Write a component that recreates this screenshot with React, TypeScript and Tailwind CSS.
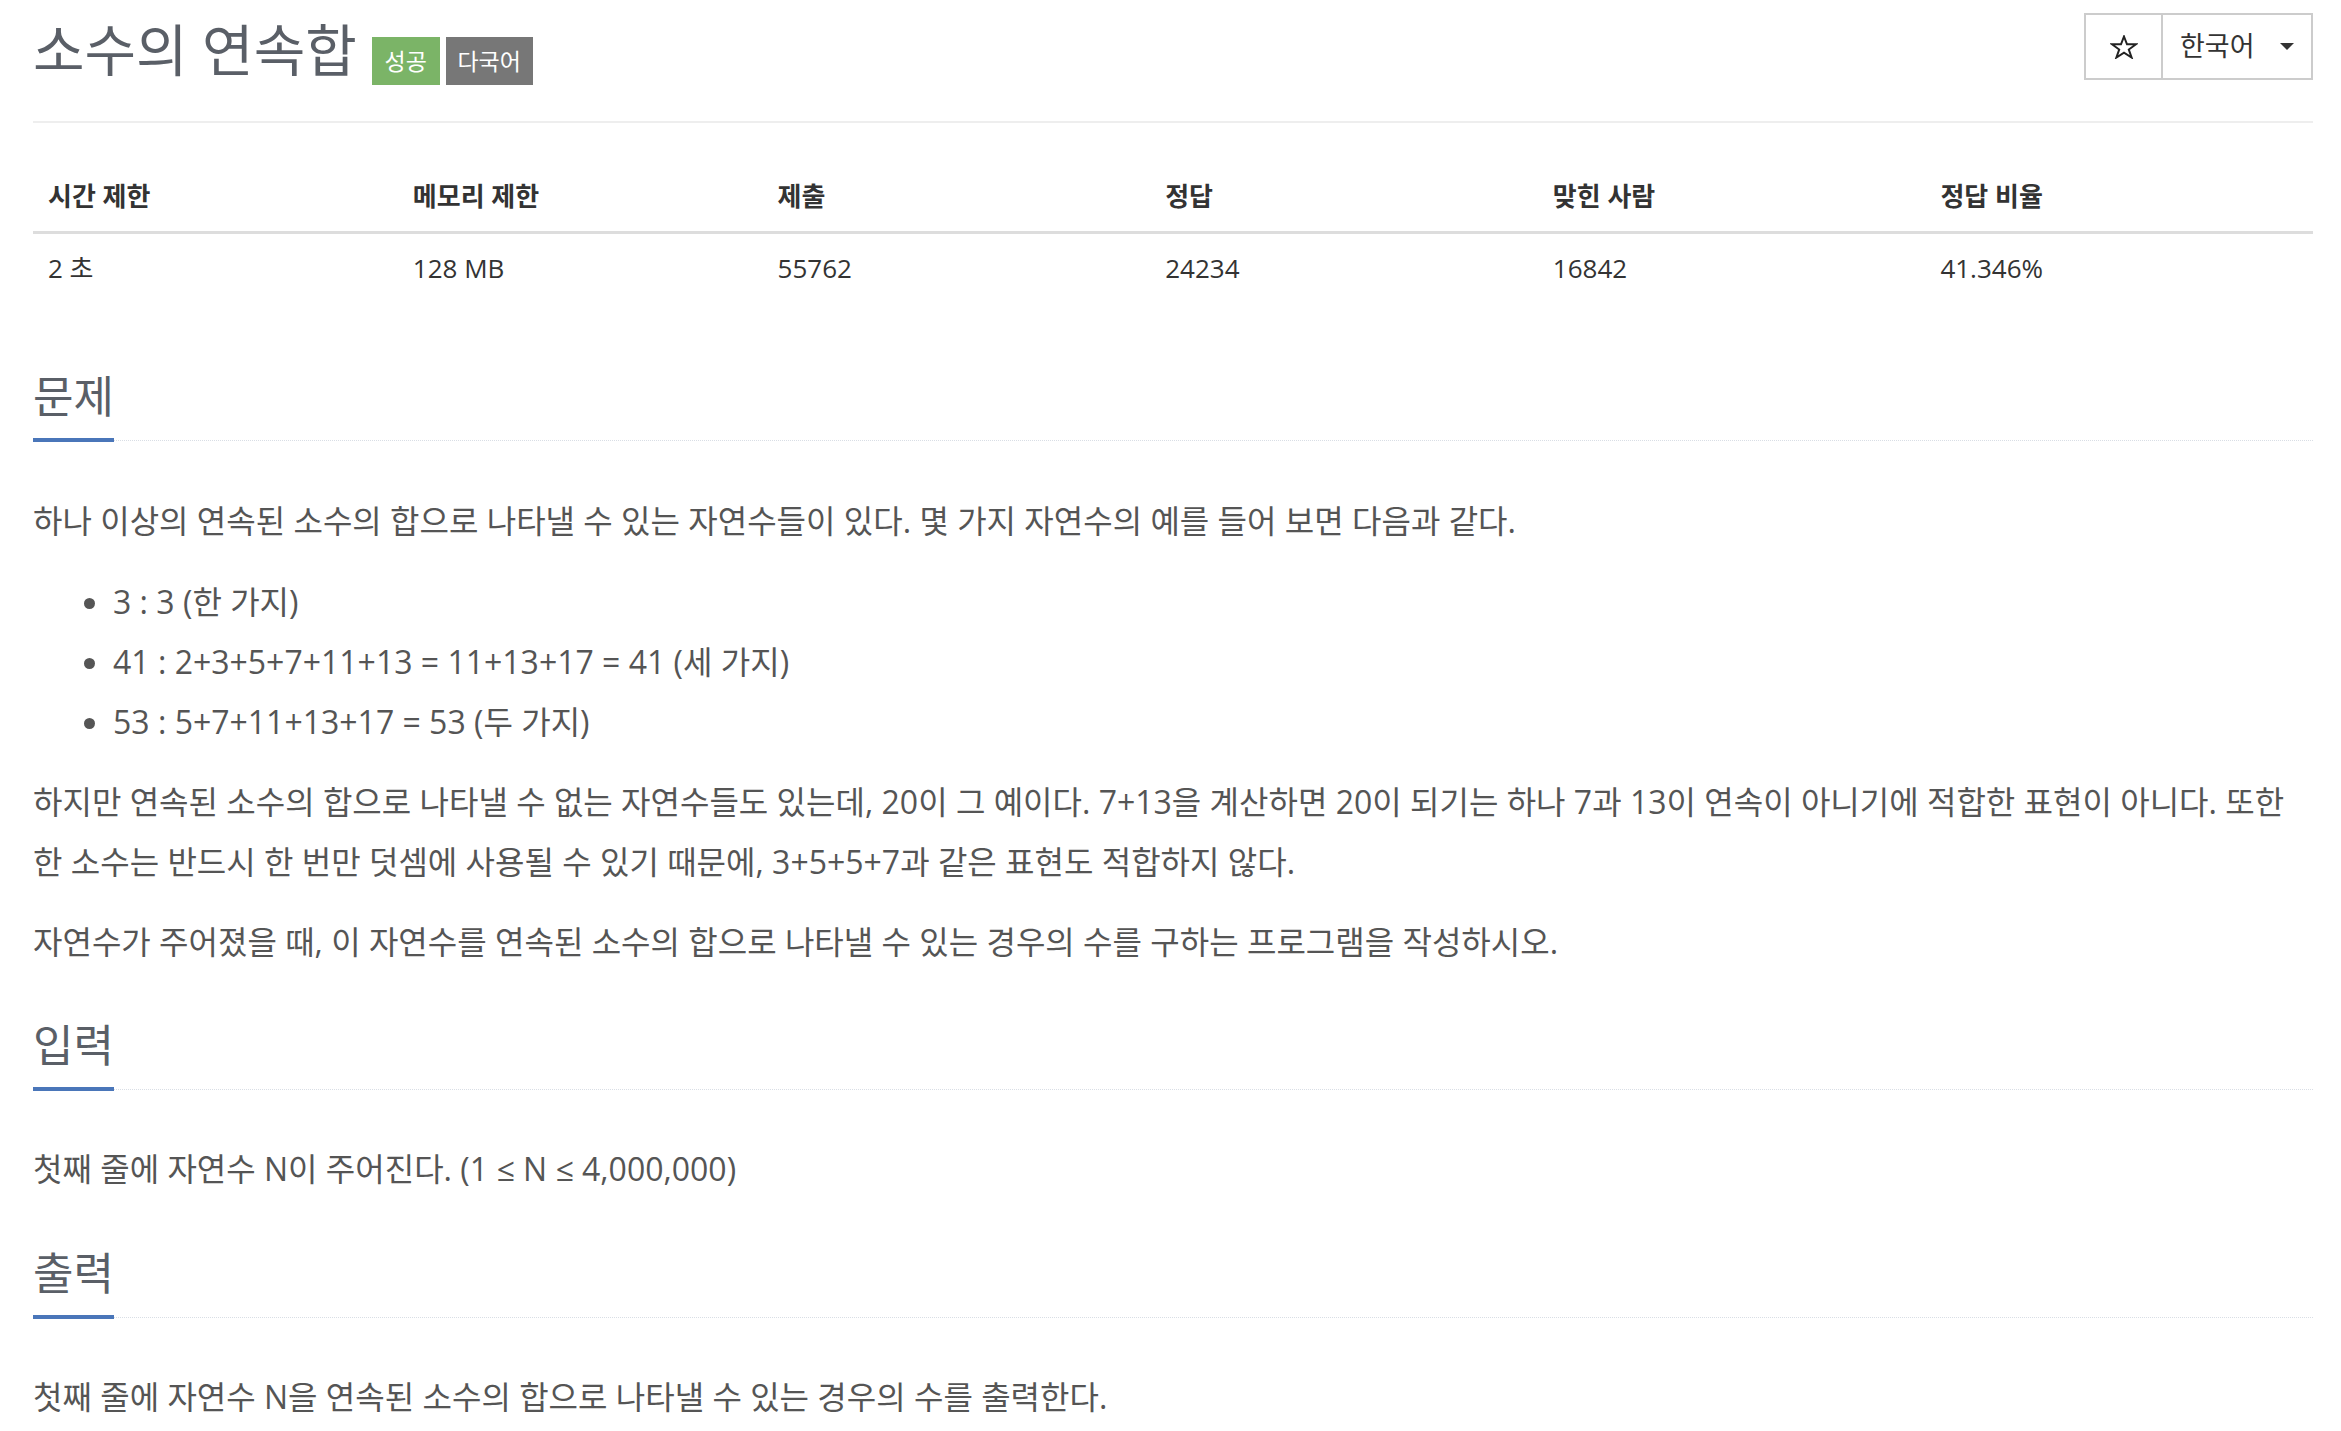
import React from 'react';

const font = "font-['Open_Sans','Noto_Sans_CJK_KR',sans-serif]";

const stats = [
  { label: '시간 제한', value: '2 초', width: 'w-[16%]' },
  { label: '메모리 제한', value: '128 MB', width: 'w-[16%]' },
  { label: '제출', value: '55762', width: 'w-[17%]' },
  { label: '정답', value: '24234', width: 'w-[17%]' },
  { label: '맞힌 사람', value: '16842', width: 'w-[17%]' },
  { label: '정답 비율', value: '41.346%', width: 'w-[17%]' },
];

const StarIcon = () => (
  <svg width="28" height="24" viewBox="0 0 28 24" fill="none">
    <polygon
      points="14,1.5 17,9.3 26,9.3 18.8,14.5 21.6,22.5 14,17.6 6.4,22.5 9.2,14.5 2,9.3 11,9.3"
      stroke="#222"
      strokeWidth="2"
      strokeLinejoin="miter"
    />
  </svg>
);

const Headline = ({ title }: { title: string }) => (
  <div className="border-b border-dotted border-[#d9dee5]">
    <h2 className="inline-block text-[44px] leading-[48px] text-[#5a5f67] font-normal pb-[18px] border-b-4 border-[#4a76b9] -mb-[2px]">
      {title}
    </h2>
  </div>
);

const App = () => {
  return (
    <div className={`${font} min-h-screen bg-white pl-[33px] pr-[28px]`}>
      {/* Header */}
      <div className="flex items-start border-b-2 border-[#eee] h-[123px]">
        <h1 className="text-[56px] leading-[60px] mt-[19px] text-[#5a5f67] font-normal">소수의 연속합</h1>
        <div className="flex gap-[6px] ml-[15px] mt-[37px]">
          <span className="w-[68px] h-[48px] flex items-center justify-center bg-[#7bb467] text-white text-[23px]">성공</span>
          <span className="w-[87px] h-[48px] flex items-center justify-center bg-[#777] text-white text-[23px]">다국어</span>
        </div>
        <div className="ml-auto mt-[13px] flex h-[67px] border-2 border-[#ccc]">
          <div className="w-[77px] flex items-center justify-center border-r-2 border-[#ccc]">
            <StarIcon />
          </div>
          <div className="w-[148px] flex items-center pl-[17px] text-[27px] text-[#333]">
            <span>한국어</span>
            <span className="ml-auto mr-[17px] w-0 h-0 border-l-[7px] border-r-[7px] border-t-[7px] border-l-transparent border-r-transparent border-t-[#333]" />
          </div>
        </div>
      </div>

      {/* Stats table */}
      <table className="w-full table-fixed mt-[55px] text-[26px] text-[#333]">
        <thead>
          <tr className="border-b-[3px] border-[#ddd]">
            {stats.map((s) => (
              <th key={s.label} className={`${s.width} text-left font-bold pl-[15px] pb-[17px] leading-[36px]`}>
                {s.label}
              </th>
            ))}
          </tr>
        </thead>
        <tbody>
          <tr>
            {stats.map((s) => (
              <td key={s.label} className="pl-[15px] pt-[16px] pb-[16px] leading-[36px]">
                {s.value}
              </td>
            ))}
          </tr>
        </tbody>
      </table>

      {/* 문제 */}
      <section className="mt-[70px]">
        <Headline title="문제" />
        <div className="mt-[50px] text-[32px] leading-[60px] text-[#555]">
          <p>하나 이상의 연속된 소수의 합으로 나타낼 수 있는 자연수들이 있다. 몇 가지 자연수의 예를 들어 보면 다음과 같다.</p>
          <ul className="mt-[21px] list-disc pl-[80px] marker:text-[#555]">
            <li>3 : 3 (한 가지)</li>
            <li>41 : 2+3+5+7+11+13 = 11+13+17 = 41 (세 가지)</li>
            <li>53 : 5+7+11+13+17 = 53 (두 가지)</li>
          </ul>
          <p className="mt-[20px]">
            하지만 연속된 소수의 합으로 나타낼 수 없는 자연수들도 있는데, 20이 그 예이다. 7+13을 계산하면 20이 되기는 하나 7과 13이 연속이 아니기에 적합한 표현이 아니다. 또한 한 소수는 반드시 한 번만 덧셈에 사용될 수 있기 때문에, 3+5+5+7과 같은 표현도 적합하지 않다.
          </p>
          <p className="mt-[20px]">자연수가 주어졌을 때, 이 자연수를 연속된 소수의 합으로 나타낼 수 있는 경우의 수를 구하는 프로그램을 작성하시오.</p>
        </div>
      </section>

      {/* 입력 */}
      <section className="mt-[49px]">
        <Headline title="입력" />
        <p className="mt-[49px] text-[32px] leading-[60px] text-[#555]">첫째 줄에 자연수 N이 주어진다. (1 ≤ N ≤ 4,000,000)</p>
      </section>

      {/* 출력 */}
      <section className="mt-[50px]">
        <Headline title="출력" />
        <p className="mt-[49px] text-[32px] leading-[60px] text-[#555]">첫째 줄에 자연수 N을 연속된 소수의 합으로 나타낼 수 있는 경우의 수를 출력한다.</p>
      </section>
    </div>
  );
};

export default App;
